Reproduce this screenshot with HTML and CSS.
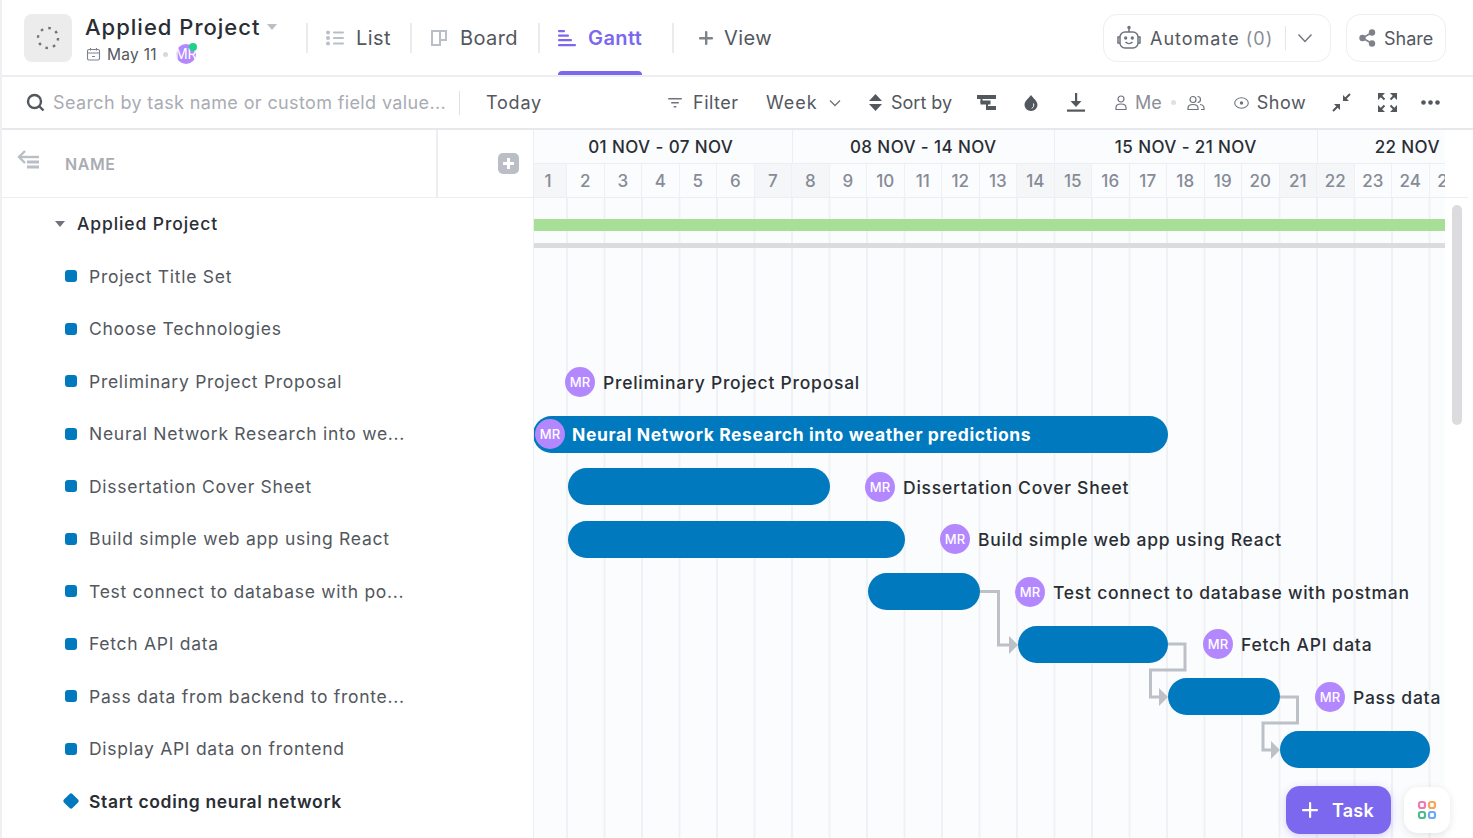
FILE: index.html
```html
<!DOCTYPE html>
<html lang="en">
<head>
<meta charset="utf-8">
<title>Applied Project - Gantt</title>
<link rel="stylesheet" href="styles.css">
</head>
<body>
<div class="app">
  <header class="topbar">
    <div class="space-icon">
      <svg width="26" height="26" viewBox="0 0 26 26"><circle cx="13" cy="13" r="10" fill="none" stroke="#6f737b" stroke-width="2.4" stroke-dasharray="2.6 5.25"/></svg>
    </div>
    <div class="title-block">
      <div class="title-line"><span class="title">Applied Project</span><span class="title-caret"></span></div>
      <div class="meta-line">
        <svg class="meta-cal" width="15" height="15" viewBox="0 0 15 15" fill="none" stroke="#7d828b" stroke-width="1.1"><rect x="1.5" y="2.5" width="12" height="10.5" rx="1.5"/><path d="M1.5 6h12M4.5 1v2.5M10.5 1v2.5M6 9.5h3"/></svg>
        <span class="meta-date">May 11</span><span class="meta-dot"></span>
        <span class="meta-avatar">MR<i class="online"></i></span>
      </div>
    </div>
    <nav class="tabs">
      <a class="tab tab-list">
        <svg width="18" height="16" viewBox="0 0 18 16" fill="#b9bec7"><circle cx="2" cy="2.5" r="2"/><circle cx="2" cy="8" r="2"/><circle cx="2" cy="13.5" r="2"/><rect x="7" y="1.5" width="11" height="2" rx="1"/><rect x="7" y="7" width="11" height="2" rx="1"/><rect x="7" y="12.5" width="11" height="2" rx="1"/></svg>
        <span>List</span>
      </a>
      <a class="tab tab-board">
        <svg width="18" height="18" viewBox="0 0 18 18" fill="none" stroke="#b9bec7" stroke-width="2"><path d="M2 2h14v9h-6v5H2z"/><path d="M10 2v9"/></svg>
        <span>Board</span>
      </a>
      <a class="tab tab-gantt">
        <svg width="18" height="18" viewBox="0 0 18 18" fill="#7b68ee"><rect x="0" y="1" width="7" height="2.2" rx="1"/><rect x="0" y="5.5" width="11" height="2.2" rx="1"/><rect x="0" y="10" width="14" height="2.2" rx="1"/><rect x="0" y="15" width="18" height="2.2" rx="1"/></svg>
        <span>Gantt</span>
      </a>
      <a class="tab tab-view">
        <svg width="16" height="16" viewBox="0 0 16 16" fill="#7d828b"><rect x="7" y="1" width="2.4" height="14" rx="1"/><rect x="1" y="7" width="14" height="2.4" rx="1"/></svg>
        <span>View</span>
      </a>
    </nav>
    <div class="top-actions">
      <div class="pill automate">
        <svg width="26" height="26" viewBox="0 0 26 26" fill="none" stroke="#6f737b" stroke-width="1.5"><rect x="4" y="7" width="18" height="16" rx="5"/><path d="M13 7V3"/><circle cx="13" cy="2.5" r="1" fill="#6f737b"/><path d="M4 12H2v6h2M22 12h2v6h-2"/><circle cx="9.7" cy="13" r=".9" fill="#6f737b"/><circle cx="16.3" cy="13" r=".9" fill="#6f737b"/><path d="M9.5 17c2 2 5 2 7 0"/></svg>
        <span class="auto-label">Automate <em>(0)</em></span>
        <span class="pill-sep"></span>
        <svg class="auto-chev" width="16" height="10" viewBox="0 0 16 10" fill="none" stroke="#6f737b" stroke-width="1.4"><path d="M1.5 1.5 8 8.5l6.500-7"/></svg>
      </div>
      <div class="pill share">
        <svg width="17" height="18" viewBox="0 0 17 18" fill="#7d828b"><circle cx="3.500" cy="9" r="3.200"/><circle cx="13" cy="3.500" r="3.200"/><circle cx="13" cy="14.500" r="3.200"/><path d="M3.500 9 13 3.500M3.500 9 13 14.500" stroke="#7d828b" stroke-width="1.600"/></svg>
        <span>Share</span>
      </div>
    </div>
  </header>

  <div class="toolbar">
    <svg class="search-ic" width="19" height="19" viewBox="0 0 19 19" fill="none" stroke="#53575e" stroke-width="2.400"><circle cx="8.500" cy="8.500" r="6.500"/><path d="m13 13 4.500 4.500"/></svg>
    <span class="search-text">Search by task name or custom field value...</span>
    <span class="tool-sep"></span>
    <span class="tool today">Today</span>
    <span class="tool filter">
      <svg width="14" height="12" viewBox="0 0 14 12" fill="#6f737b"><rect x="0" y="1" width="14" height="1.500" rx=".7"/><rect x="3" y="5" width="8" height="1.500" rx=".7"/><rect x="5.500" y="9" width="3" height="1.500" rx=".7"/></svg>
      <span>Filter</span>
    </span>
    <span class="tool range"><span>Week</span>
      <svg width="12" height="8" viewBox="0 0 12 8" fill="none" stroke="#6f737b" stroke-width="1.300"><path d="m1 1.500 5 5 5-5"/></svg>
    </span>
    <span class="tool sort">
      <svg width="13" height="17" viewBox="0 0 13 17" fill="#53575e"><path d="M6.500 0 13 7H0zM0 10h13l-6.500 7z"/></svg>
      <span>Sort by</span>
    </span>
    <svg class="ic ic-tree" width="19" height="17" viewBox="0 0 19 17" fill="#53575e"><rect x="0" y="1" width="19" height="4"/><rect x="3.500" y="6.500" width="10" height="4"/><rect x="9" y="12" width="10" height="4"/><rect x="3.500" y="4" width="2" height="5"/><rect x="9" y="9" width="2" height="5"/></svg>
    <svg class="ic ic-drop" width="14" height="16" viewBox="0 0 14 16"><path d="M7 0c2.500 3.500 6.500 6 6.500 10a6.500 6 0 0 1-13 0C.5 6 4.500 3.500 7 0z" fill="#53575e"/><path d="M9.500 8.500c.8 2.300-.2 4-1.800 4.800" fill="none" stroke="#fff" stroke-width="1"/></svg>
    <svg class="ic ic-down" width="18" height="19" viewBox="0 0 18 19" fill="#53575e"><rect x="0" y="16.500" width="18" height="2.200"/><rect x="8" y="0" width="2.200" height="11"/><path d="M3.500 8h11L9 14z"/></svg>
    <span class="tool me">
      <svg width="12" height="16" viewBox="0 0 12 16" fill="none" stroke="#6f737b" stroke-width="1.200"><circle cx="6" cy="4" r="3"/><path d="M1 14.500v-2c0-2 2-3.500 5-3.500s5 1.500 5 3.500v2z"/></svg>
      <span>Me</span>
    </span>
    <span class="me-dot"></span>
    <svg class="ic ic-people" width="18" height="16" viewBox="0 0 18 16" fill="none" stroke="#6f737b" stroke-width="1.200"><circle cx="6" cy="4.500" r="3"/><path d="M1 14.500v-1.500c0-2 2-3.500 5-3.500s5 1.500 5 3.500v1.500zM10.500 1.500c2 0 3 1.300 3 3s-1 3-3 3M13 9.500c2.500.3 4 1.700 4 3.500v1.500h-3"/></svg>
    <span class="tool show">
      <svg width="15" height="12" viewBox="0 0 15 12" fill="none" stroke="#6f737b" stroke-width="1.100"><ellipse cx="7.500" cy="6" rx="6.800" ry="5.200"/><circle cx="7.500" cy="6" r="1.700" fill="#6f737b" stroke="none"/></svg>
      <span>Show</span>
    </span>
    <svg class="ic ic-collapse" width="19" height="19" viewBox="0 0 19 19" fill="#53575e"><path d="M18 1 12.500 6.500M1 18l5.500-5.500" stroke="#53575e" stroke-width="2"/><path d="M11 2v6h6zM2 11h6v6z"/></svg>
    <svg class="ic ic-expand" width="19" height="19" viewBox="0 0 19 19" fill="#53575e"><path d="M0 0h7L0 7zM19 0h-7l7 7zM0 19h7l-7-7zM19 19h-7l7-7z"/><path d="m3 3 3.500 3.500M16 3l-3.500 3.500M3 16l3.500-3.500M16 16l-3.500-3.500" stroke="#53575e" stroke-width="2"/></svg>
    <svg class="ic ic-more" width="19" height="5" viewBox="0 0 19 5" fill="#53575e"><circle cx="2.500" cy="2.500" r="2.300"/><circle cx="9.500" cy="2.500" r="2.300"/><circle cx="16.500" cy="2.500" r="2.300"/></svg>
  </div>

  <main class="main">
    <section class="side">
      <div class="side-head">
        <svg class="collapse-ic" width="22" height="19" viewBox="0 0 22 19" fill="none" stroke="#b9bec7"><path d="M8 1 2 7l6 6" stroke-width="2.400"/><path d="M2 7h20" stroke-width="2.400"/><path d="M10 12h12M10 17h12" stroke-width="2.800"/></svg>
        <span class="name-label">NAME</span>
        <span class="head-rule"></span>
        <span class="add-col"></span>
      </div>
      <ul class="task-list">
        <li class="task task-parent"><i class="caret"></i><span>Applied Project</span></li>
        <li class="task"><i class="dot"></i><span>Project Title Set</span></li>
        <li class="task"><i class="dot"></i><span>Choose Technologies</span></li>
        <li class="task"><i class="dot"></i><span>Preliminary Project Proposal</span></li>
        <li class="task"><i class="dot"></i><span>Neural Network Research into we...</span></li>
        <li class="task"><i class="dot"></i><span>Dissertation Cover Sheet</span></li>
        <li class="task"><i class="dot"></i><span>Build simple web app using React</span></li>
        <li class="task"><i class="dot"></i><span>Test connect to database with po...</span></li>
        <li class="task"><i class="dot"></i><span>Fetch API data</span></li>
        <li class="task"><i class="dot"></i><span>Pass data from backend to fronte...</span></li>
        <li class="task"><i class="dot"></i><span>Display API data on frontend</span></li>
        <li class="task task-milestone"><i class="diamond"></i><span>Start coding neural network</span></li>
      </ul>
    </section>

    <section class="gantt">
      <div class="weeks">
        <div class="week week-first">01 NOV - 07 NOV</div>
        <div class="week">08 NOV - 14 NOV</div>
        <div class="week">15 NOV - 21 NOV</div>
        <div class="week week-last">22 NOV</div>
      </div>
      <div class="days">
        <div class="day off">1</div><div class="day">2</div><div class="day">3</div><div class="day">4</div><div class="day">5</div><div class="day">6</div><div class="day off">7</div><div class="day off">8</div><div class="day">9</div><div class="day">10</div><div class="day">11</div><div class="day">12</div><div class="day">13</div><div class="day off">14</div><div class="day off">15</div><div class="day">16</div><div class="day">17</div><div class="day">18</div><div class="day">19</div><div class="day">20</div><div class="day off">21</div><div class="day off">22</div><div class="day">23</div><div class="day">24</div><div class="day">25</div>
      </div>
      <div class="chart">
        <div class="row row-summary"><div class="sum-green"></div><div class="sum-grey"></div></div>
        <div class="row"></div>
        <div class="row"></div>
        <div class="row"><div class="label" style="margin-left:31px"><span class="avatar">MR</span><span class="label-text">Preliminary Project Proposal</span></div></div>
        <div class="row"><div class="bar bar-text" style="margin-left:-1px;width:635px"><span class="avatar">MR</span><span>Neural Network Research into weather predictions</span></div></div>
        <div class="row"><div class="bar" style="margin-left:34px;width:262px"></div><div class="label" style="margin-left:35px"><span class="avatar">MR</span><span class="label-text">Dissertation Cover Sheet</span></div></div>
        <div class="row"><div class="bar" style="margin-left:34px;width:337px"></div><div class="label" style="margin-left:35px"><span class="avatar">MR</span><span class="label-text">Build simple web app using React</span></div></div>
        <div class="row"><div class="bar" style="margin-left:334px;width:112px"></div><div class="label" style="margin-left:35px"><span class="avatar">MR</span><span class="label-text">Test connect to database with postman</span></div></div>
        <div class="row"><div class="bar" style="margin-left:484px;width:150px"></div><div class="label" style="margin-left:35px"><span class="avatar">MR</span><span class="label-text">Fetch API data</span></div></div>
        <div class="row"><div class="bar" style="margin-left:634px;width:112px"></div><div class="label" style="margin-left:35px"><span class="avatar">MR</span><span class="label-text">Pass data from backend to frontend</span></div></div>
        <div class="row"><div class="bar" style="margin-left:746px;width:150px"></div></div>
        <svg class="links" width="911" height="640" viewBox="0 0 911 640" fill="none" stroke="#bcc0c7" stroke-width="3">
          <path d="M446 393.500H464.500V447H476"/><path d="M475 438l9 9-9 9z" fill="#bcc0c7" stroke="none"/>
          <path d="M634 446H651V472H616.500V499H626"/><path d="M625 490l9 9-9 9z" fill="#bcc0c7" stroke="none"/>
          <path d="M746 499H763.500V525H729V552H738"/><path d="M737 543l9 9-9 9z" fill="#bcc0c7" stroke="none"/>
        </svg>
      </div>
    </section>

    <aside class="rail"><div class="thumb"></div></aside>

    <div class="fab-group">
      <button class="fab-task"><svg width="16" height="16" viewBox="0 0 16 16" fill="#fff"><rect x="7" y="0" width="2.200" height="16" rx="1"/><rect x="0" y="7" width="16" height="2.200" rx="1"/></svg><span>Task</span></button>
      <button class="fab-apps"><svg width="20" height="20" viewBox="0 0 20 20" fill="none" stroke-width="2.200"><rect x="2" y="2" width="6" height="6" rx="2" stroke="#f178b6"/><rect x="12" y="2" width="6" height="6" rx="2" stroke="#f5a65b"/><rect x="2" y="12" width="6" height="6" rx="2" stroke="#4dbb8c"/><rect x="12" y="12" width="6" height="6" rx="2" stroke="#6fa8f5"/></svg></button>
    </div>
  </main>
</div>
</body>
</html>
```
FILE: styles.css
```css
* { box-sizing: border-box; }
html, body { margin: 0; height: 100%; overflow: hidden; background: #fff; }
body { font-family: Inter, "Noto Sans", sans-serif; color: #2a2e34; }
.app { width: 1473px; height: 838px; display: flex; flex-direction: column; overflow: hidden; border-left: 2px solid #eef0f3; }

/* top bar */
.topbar { height: 77px; flex: none; display: flex; align-items: flex-start; border-bottom: 2px solid #eceef2; padding: 14px 0 0 22px; position: relative; }
.space-icon { width: 48px; height: 48px; background: #ececec; border-radius: 8px; display: flex; align-items: center; justify-content: center; flex: none; }
.title-block { margin-left: 13px; width: 221px; flex: none; }
.title-line { display: flex; align-items: center; height: 26px; }
.title { font-size: 22px; font-weight: 500; letter-spacing: 1px; }
.title-caret { margin-left: 7px; border: 5.5px solid transparent; border-top: 6px solid #b9bec7; border-bottom: 0; }
.meta-line { display: flex; align-items: center; height: 26px; margin-top: 1px; font-size: 16px; color: #53575e; }
.meta-cal { margin-left: 1px; }
.meta-date { margin-left: 6px; font-size: 15.500px; letter-spacing: .3px; }
.meta-dot { width: 5px; height: 5px; border-radius: 50%; background: #d5d8dd; margin-left: 6px; }
.meta-avatar { margin-left: 8px; width: 20px; height: 20px; border-radius: 50%; background: #b388ff; color: #fff; font-size: 14px; line-height: 20px; white-space: nowrap; position: relative; overflow: visible; text-align: center; display: block; text-indent: -1px; }
.online { position: absolute; top: -1px; right: -1px; width: 8px; height: 8px; border-radius: 50%; background: #1fd286; }
.tabs { display: flex; align-items: center; height: 47px; font-size: 20px; color: #53575e; letter-spacing: .4px; }
.tab { display: flex; align-items: center; height: 30px; gap: 12px; position: relative; border-left: 2px solid #e9ebef; margin-top: 1px; white-space: nowrap; }
.tab-list { padding-left: 18px; width: 104px; }
.tab-board { padding-left: 18px; width: 128px; }
.tab-gantt { padding-left: 18px; width: 134px; color: #7b68ee; font-weight: 600; }
.tab-gantt::after { content: ""; position: absolute; left: 18px; top: 48px; width: 84px; height: 4px; background: #7b68ee; border-radius: 4px 4px 0 0; }
.tab-view { padding-left: 24px; gap: 10px; }
.top-actions { margin-left: auto; display: flex; gap: 15px; margin-right: 27px; }
.pill { height: 48px; border: 1.500px solid #eceef1; border-radius: 14px; display: flex; align-items: center; font-size: 18px; color: #53575e; }
.automate { width: 228px; padding-left: 12px; }
.auto-label { margin-left: 8px; white-space: nowrap; letter-spacing: 1px; }
.auto-label em { font-style: normal; color: #8a8e96; }
.pill-sep { width: 1px; height: 24px; background: #e3e5e9; margin-left: 12px; }
.auto-chev { margin-left: 11px; }
.share { width: 100px; padding-left: 12px; gap: 8px; }

/* toolbar */
.toolbar { height: 53px; flex: none; display: flex; align-items: center; border-bottom: 2px solid #e6e8ec; font-size: 18px; color: #53575e; white-space: nowrap; }
.search-ic { margin-left: 24px; flex: none; }
.search-text { margin-left: 8px; width: 400px; color: #a9acb3; letter-spacing: .37px; }
.tool-sep { width: 1px; height: 24px; background: #dfe1e5; margin-left: 6px; }
.tool { display: flex; align-items: center; }
.today { margin-left: 26px; width: 182px; letter-spacing: .8px; }
.filter { gap: 11px; width: 98px; letter-spacing: .5px; }
.range { gap: 11px; width: 103px; letter-spacing: 1px; }
.sort { gap: 9px; width: 108px; }
.ic { flex: none; }
.ic-drop { margin-left: 28px; }
.ic-down { margin-left: 29px; }
.me { margin-left: 30px; gap: 8px; color: #8a8e96; }
.me-dot { width: 5px; height: 5px; border-radius: 50%; background: #dfe1e5; margin-left: 9px; }
.ic-people { margin-left: 11px; }
.show { margin-left: 29px; gap: 8px; letter-spacing: .5px; }
.ic-collapse { margin-left: 26px; }
.ic-expand { margin-left: 27px; }
.ic-more { margin-left: 24px; }

/* layout */
.main { flex: 1; display: flex; position: relative; min-height: 0; }
.side { width: 532px; flex: none; border-right: 1px solid #eceef2; }
.side-head { height: 68px; border-bottom: 1px solid #eceef2; display: flex; align-items: center; position: relative; }
.collapse-ic { margin-left: 15px; margin-top: -9px; }
.name-label { margin-left: 26px; font-size: 16px; font-weight: 600; color: #a9acb3; letter-spacing: .6px; }
.head-rule { margin-left: 320px; width: 2px; align-self: stretch; background: #eceef2; }
.add-col { margin-left: 60px; width: 21px; height: 21px; border-radius: 5px; background: #b9bec7 linear-gradient(#fff, #fff) center / 11px 3px no-repeat; position: relative; }
.add-col::after { content: ""; position: absolute; left: 9px; top: 5px; width: 3px; height: 11px; background: #fff; }
.task-list { list-style: none; margin: -.4px 0 0; padding: 0; }
.task { height: 52.500px; display: flex; align-items: center; padding-left: 63px; font-size: 17.500px; color: #53575e; white-space: nowrap; letter-spacing: .72px; }
.dot { width: 12px; height: 12px; border-radius: 3px; background: #0079bf; margin-right: 12px; flex: none; }
.diamond { width: 12px; height: 12px; border-radius: 2px; background: #0079bf; transform: rotate(45deg); margin-right: 12px; flex: none; }
.task-parent { padding-left: 53px; color: #2a2e34; font-weight: 500; letter-spacing: .9px; }
.caret { border: 5px solid transparent; border-top: 6px solid #6f737b; border-bottom: 0; margin-right: 12px; }
.task-milestone { color: #2a2e34; font-weight: 600; letter-spacing: .65px; }

/* gantt */
.gantt { width: 911px; flex: none; background: #fbfcfe; overflow: hidden; position: relative; }
.weeks { display: grid; grid-template-columns: 258.500px 262.500px 262.500px 127.500px; height: 34px; border-bottom: 1px solid #eceef2; }
.week { display: flex; align-items: center; justify-content: center; font-size: 17px; font-weight: 500; border-right: 1.500px solid #eceef2; white-space: nowrap; letter-spacing: .4px; }
.week-first { padding-right: 4px; }
.week-last { border-right: 0; padding-left: 52px; }
.days { display: grid; grid-template-columns: 33px repeat(24, 37.500px); height: 34px; border-bottom: 1px solid #eceef2; width: 911px; overflow: hidden; }
.day { display: flex; align-items: center; justify-content: center; font-size: 17px; font-weight: 500; color: #868b96; border-right: 1.500px solid #eff0f3; overflow: hidden; }
.day:first-child { padding-right: 4px; }
.off { background: #f5f6f8; }
.chart { position: relative; height: 640px; background-image: linear-gradient(90deg, #f0f1f4 2px, transparent 2px); background-position: 32px 0; background-size: 37.500px 100%; }
.row { height: 52.500px; display: flex; align-items: center; white-space: nowrap; overflow: hidden; position: relative; z-index: 1; }
.row-summary { flex-direction: column; align-items: stretch; padding-top: 21px; gap: 12px; }
.sum-green { height: 12px; background: #a6df95; flex: none; }
.sum-grey { height: 5px; background: #dcdcdf; flex: none; }
.bar { height: 37px; border-radius: 19px; background: #0079bf; flex: none; }
.bar-text { display: flex; align-items: center; padding-left: 2px; color: #fff; font-size: 17.500px; font-weight: 700; gap: 7px; letter-spacing: .6px; }
.label { display: flex; align-items: center; gap: 8px; font-size: 17.500px; font-weight: 500; flex: 0 1 auto; min-width: 0; color: #2a2e34; letter-spacing: .75px; }
.label-text { min-width: 0; overflow: hidden; padding-top: 1px; }
.avatar { width: 30px; height: 30px; border-radius: 50%; background: #b388ff; color: #fff; font-size: 13px; font-weight: 500; letter-spacing: 0; display: flex; align-items: center; justify-content: center; flex: none; }
.links { position: absolute; left: 0; top: 0; z-index: 2; pointer-events: none; }

/* scrollbar + floating */
.rail { flex: 1; border-top: 68px solid transparent; position: relative; }
.rail::before { content: ""; position: absolute; left: 0; right: 5px; top: -1px; height: 1px; background: #eceef2; }
.thumb { width: 10px; height: 220px; border-radius: 5px; background: #dcdcdf; margin: 7px 0 0 7px; }
.fab-group { position: absolute; right: 23px; bottom: 4px; display: flex; gap: 13px; align-items: center; z-index: 5; }
.fab-task { width: 105px; height: 48px; border: 0; border-radius: 14px; background: #7b68ee; color: #fff; font: 600 18px Inter, sans-serif; display: flex; align-items: center; padding: 0 0 0 16px; gap: 14px; letter-spacing: .2px; box-shadow: 0 2px 8px rgba(123,104,238,.3); }
.fab-apps { width: 46px; height: 46px; border: 0; border-radius: 14px; background: #fff; box-shadow: 0 2px 8px rgba(0,0,0,.1); display: flex; align-items: center; justify-content: center; padding: 0; }
```
